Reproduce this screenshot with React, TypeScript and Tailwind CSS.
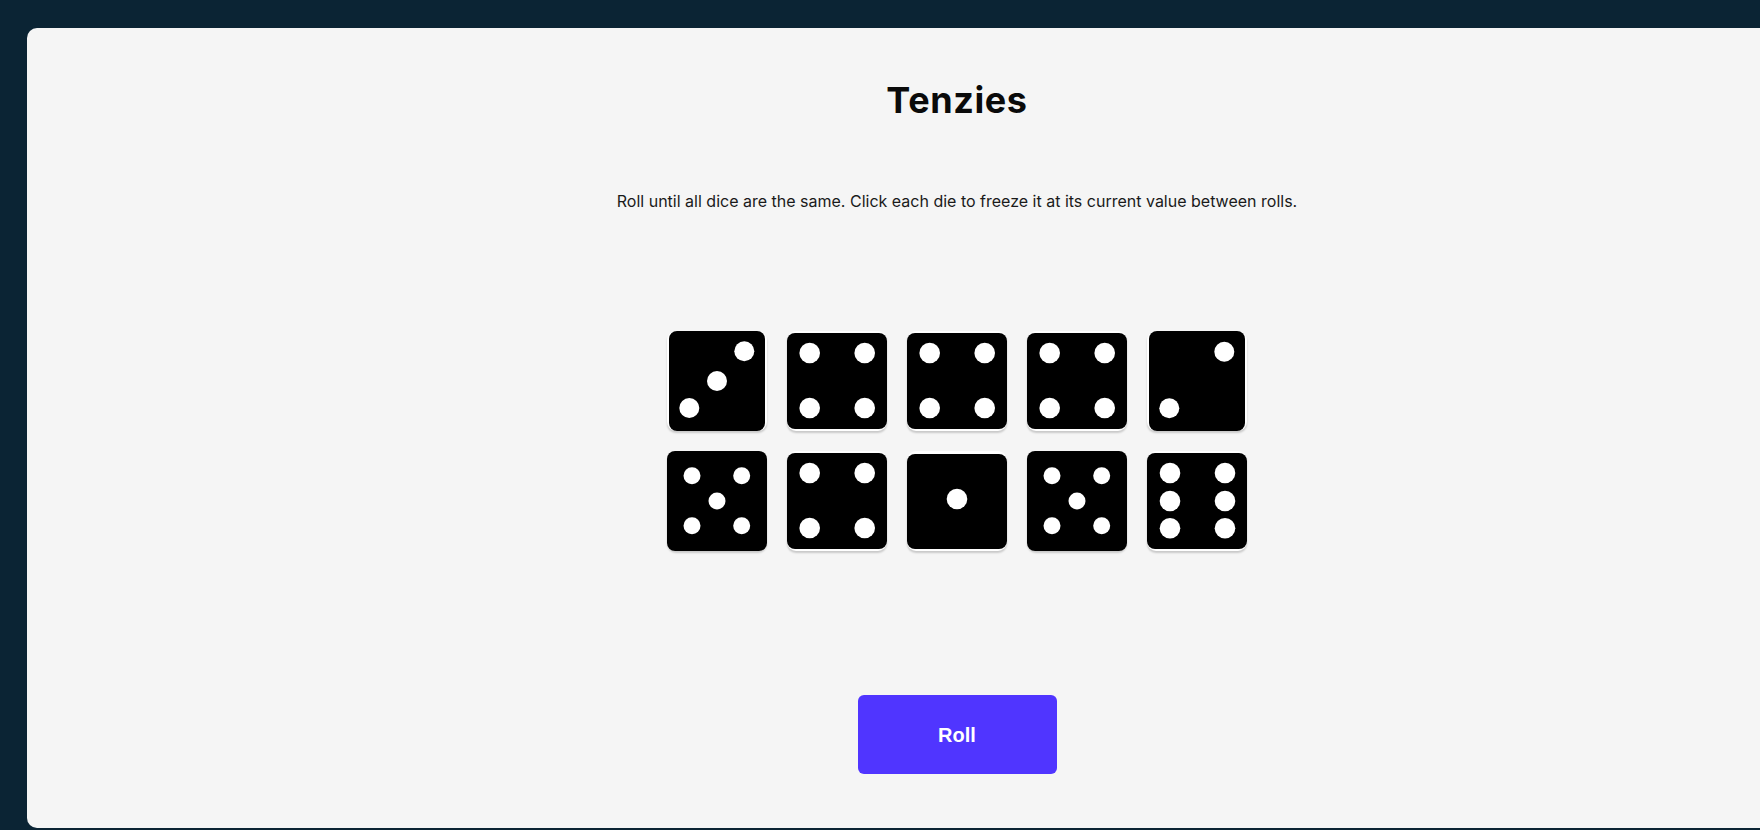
import { useState } from "react";

type Face = { w: number; h: number; r: number; pips: [number, number][] };

// each die icon has its own box, pips are in that box's coordinates
const faces: Record<number, Face> = {
  1: { w: 100, h: 95, r: 10.3, pips: [[50, 45]] },
  2: { w: 96, h: 100, r: 10, pips: [[75.3, 20.7], [20.3, 77.3]] },
  3: { w: 96, h: 100, r: 10, pips: [[75.3, 20.3], [48, 50], [20.3, 77]] },
  4: { w: 100, h: 96, r: 10.3, pips: [[22.7, 20], [77.7, 20], [22.7, 75], [77.7, 75]] },
  5: {
    w: 100,
    h: 100,
    r: 8.5,
    pips: [[25, 24.7], [74.7, 24.7], [50, 50], [25, 74.7], [74.7, 74.7]],
  },
  6: {
    w: 100,
    h: 96,
    r: 10.3,
    pips: [[23, 20], [78, 20], [23, 48], [78, 48], [23, 75.3], [78, 75.3]],
  },
};

function Die({ value, onClick }: { value: number; onClick: () => void }) {
  const f = faces[value];
  return (
    <button
      onClick={onClick}
      className="w-[100px] h-[100px] flex items-center justify-center bg-white rounded-[9px] shadow-[0_2px_2px_rgba(0,0,0,0.18)] cursor-pointer"
    >
      <svg width={f.w} height={f.h} viewBox={`0 0 ${f.w} ${f.h}`}>
        <rect x="0" y="0" width={f.w} height={f.h} rx="8" fill="#000" />
        {f.pips.map(([cx, cy], i) => (
          <circle key={i} cx={cx} cy={cy} r={f.r} fill="#fff" />
        ))}
      </svg>
    </button>
  );
}

export default function App() {
  const [dice, setDice] = useState([3, 4, 4, 4, 2, 5, 4, 1, 5, 6]);

  const roll = () => {
    setDice(dice.map(() => Math.ceil(Math.random() * 6)));
  };

  return (
    <div className="w-full h-screen overflow-hidden bg-[#0B2434] pt-[28px] pl-[27px] font-['Inter',sans-serif]">
      <main className="w-[1860px] h-[800px] bg-[#F5F5F5] rounded-[10px] flex flex-col items-center">
        <h1 className="mt-[50px] text-[36px] leading-[44px] font-bold tracking-[0.6px] text-[#0a0a0a]">
          Tenzies
        </h1>
        <p className="mt-[67px] text-[16px] leading-[24px] text-[#1a1a1a]">
          Roll until all dice are the same. Click each die to freeze it at its
          current value between rolls.
        </p>
        <div className="mt-[118px] grid grid-cols-5 gap-5">
          {dice.map((d, i) => (
            <Die key={i} value={d} onClick={() => {}} />
          ))}
        </div>
        <button
          onClick={roll}
          className="mt-[144px] w-[199px] h-[79px] rounded-[6px] bg-[#5035FF] text-white text-[20px] font-bold font-['Liberation_Sans',Arial,sans-serif]"
        >
          Roll
        </button>
      </main>
    </div>
  );
}
